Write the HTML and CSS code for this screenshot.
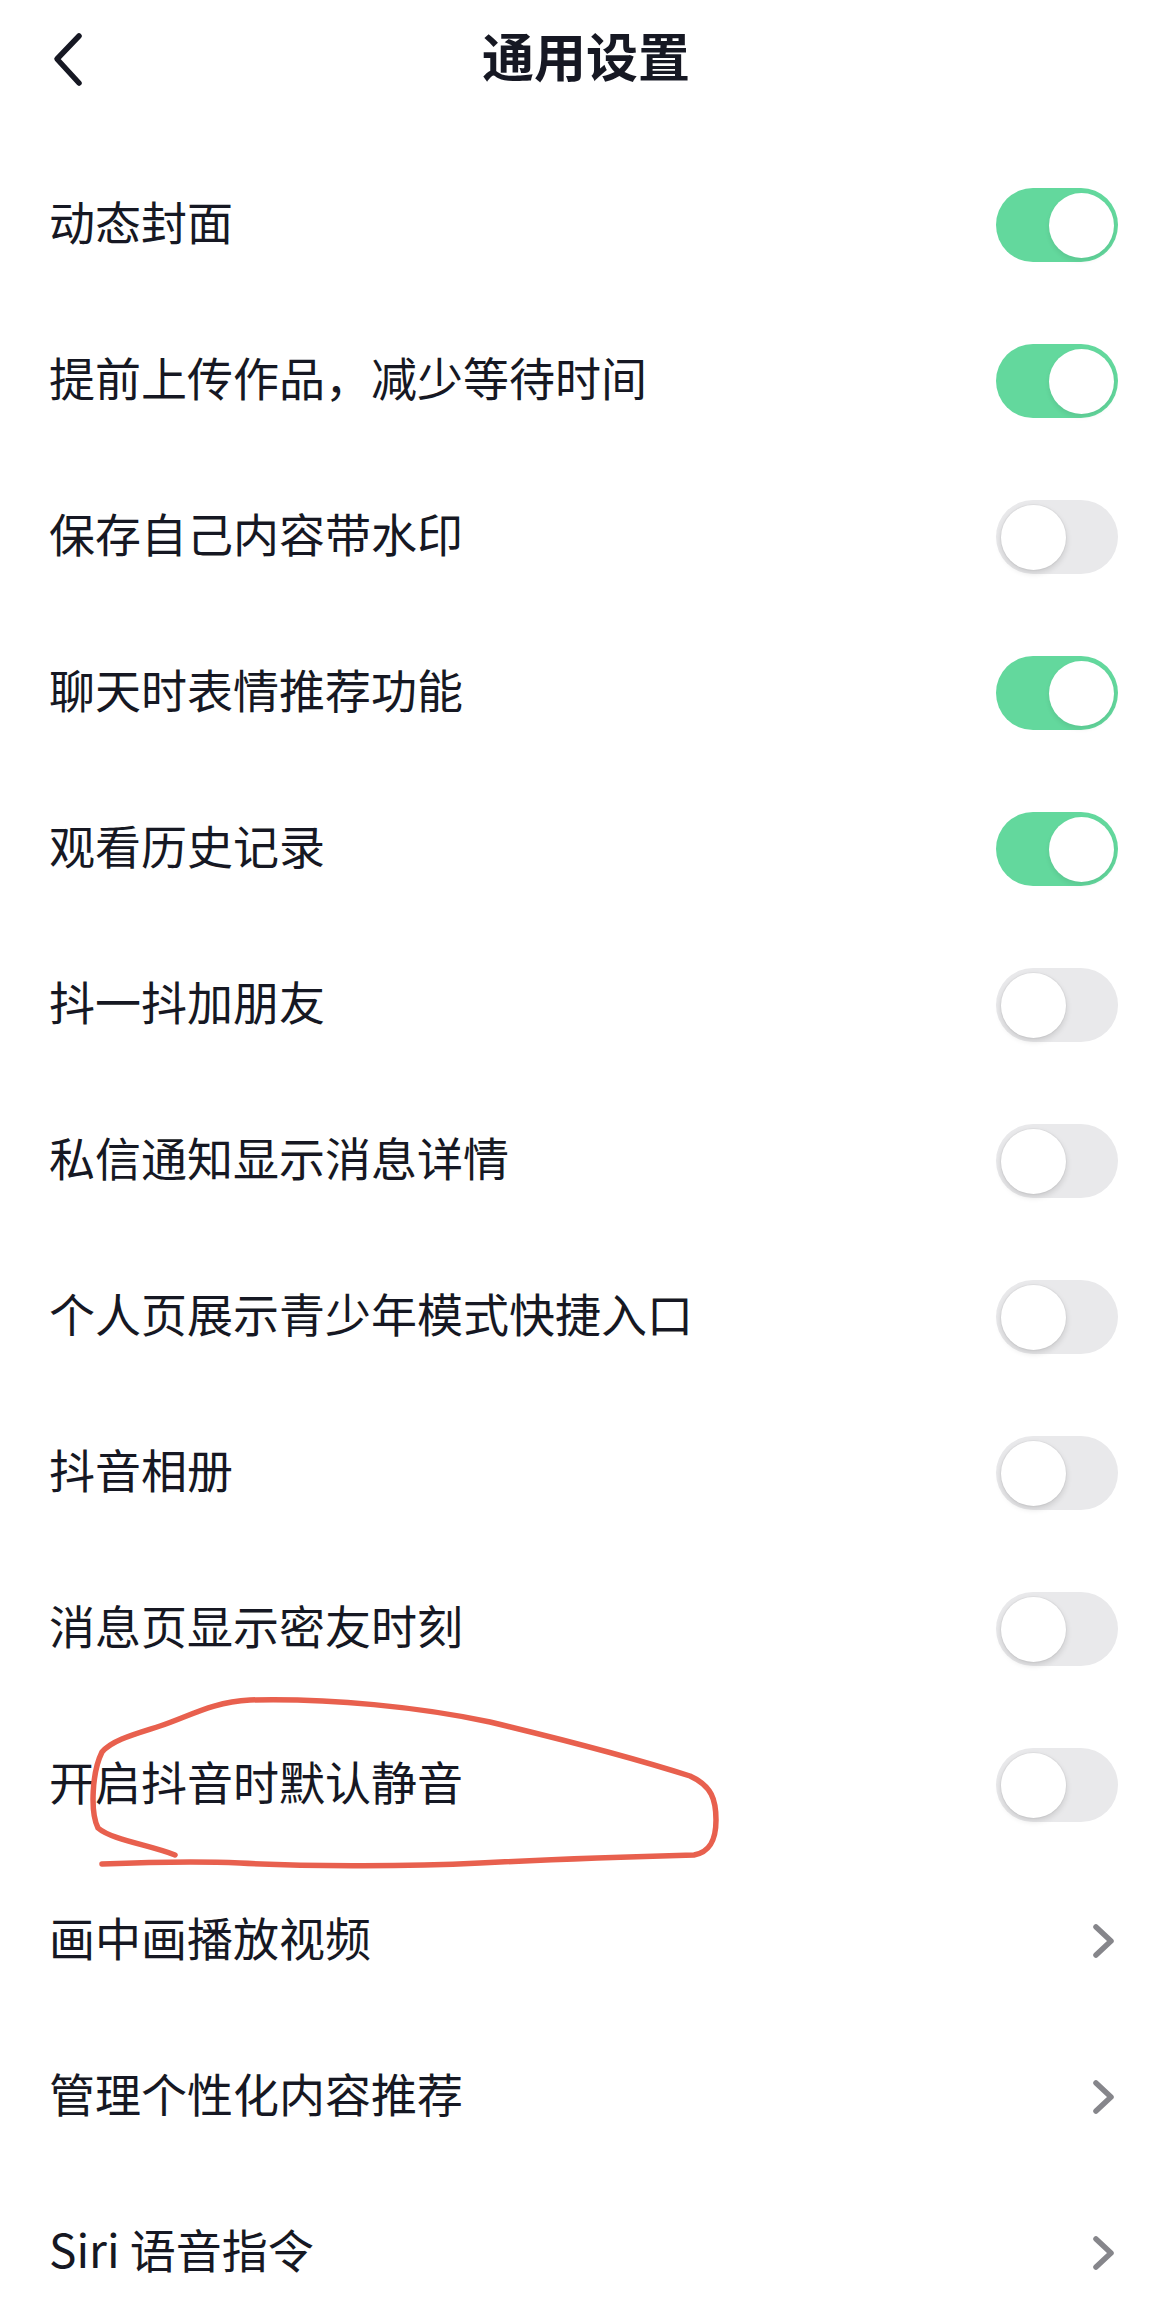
FILE: index.html
```html
<!DOCTYPE html>
<html>
<head>
    <meta charset="utf-8">
    <title>通用设置</title>
    <link rel="stylesheet" href="styles.css">
</head>
<body>
    <div class="page">
        <div class="header">
            <a class="back" href="#">
                <svg width="40" height="64" viewBox="0 0 40 64">
                    <path d="M26 10 L4 33 L26 57" fill="none" stroke="#161823" stroke-width="5.5" stroke-linecap="round" stroke-linejoin="round"/>
                </svg>
            </a>
            <h1>通用设置</h1>
            <span></span>
        </div>

        <div class="list">
            <div class="row"><span class="label">动态封面</span><span class="switch on"><span class="knob"></span></span></div>
            <div class="row"><span class="label">提前上传作品，减少等待时间</span><span class="switch on"><span class="knob"></span></span></div>
            <div class="row"><span class="label">保存自己内容带水印</span><span class="switch"><span class="knob"></span></span></div>
            <div class="row"><span class="label">聊天时表情推荐功能</span><span class="switch on"><span class="knob"></span></span></div>
            <div class="row"><span class="label">观看历史记录</span><span class="switch on"><span class="knob"></span></span></div>
            <div class="row"><span class="label">抖一抖加朋友</span><span class="switch"><span class="knob"></span></span></div>
            <div class="row"><span class="label">私信通知显示消息详情</span><span class="switch"><span class="knob"></span></span></div>
            <div class="row"><span class="label">个人页展示青少年模式快捷入口</span><span class="switch"><span class="knob"></span></span></div>
            <div class="row"><span class="label">抖音相册</span><span class="switch"><span class="knob"></span></span></div>
            <div class="row"><span class="label">消息页显示密友时刻</span><span class="switch"><span class="knob"></span></span></div>
            <div class="row"><span class="label">开启抖音时默认静音</span><span class="switch"><span class="knob"></span></span></div>
            <div class="row link"><span class="label">画中画播放视频</span>
                <svg class="chevron" width="24" height="36" viewBox="0 0 24 36"><path d="M4 4 L19 18 L4 32" fill="none" stroke="#86868b" stroke-width="5.5" stroke-linecap="round" stroke-linejoin="round"/></svg>
            </div>
            <div class="row link"><span class="label">管理个性化内容推荐</span>
                <svg class="chevron" width="24" height="36" viewBox="0 0 24 36"><path d="M4 4 L19 18 L4 32" fill="none" stroke="#86868b" stroke-width="5.5" stroke-linecap="round" stroke-linejoin="round"/></svg>
            </div>
            <div class="row link"><span class="label">Siri 语音指令</span>
                <svg class="chevron" width="24" height="36" viewBox="0 0 24 36"><path d="M4 4 L19 18 L4 32" fill="none" stroke="#86868b" stroke-width="5.5" stroke-linecap="round" stroke-linejoin="round"/></svg>
            </div>
        </div>

        <!-- hand-drawn red mark around the mute row -->
        <svg class="scribble" width="740" height="190" viewBox="0 1690 740 190">
            <path d="M175 1855 C150 1845, 112 1840, 98 1828 C90 1812, 92 1772, 102 1752 C112 1740, 135 1734, 160 1726 C190 1716, 212 1702, 250 1700 C330 1698, 420 1707, 490 1722 C565 1740, 640 1760, 690 1776 C712 1786, 716 1800, 716 1820 C716 1840, 710 1852, 694 1855 C620 1857, 540 1860, 480 1863 C400 1867, 300 1866, 240 1863 C200 1861, 150 1862, 102 1864" fill="none" stroke="#e8604e" stroke-width="5.5" stroke-linecap="round" stroke-linejoin="round"/>
        </svg>
    </div>
</body>
</html>
```

FILE: styles.css
```css
/* Settings page */

body {
    margin: 0;
    padding: 0;
    background-color: #fff;
    font-family: "Noto Sans CJK SC", sans-serif;
    color: #161823;
}

.page {
    position: relative;
    width: 1170px;
}

.header {
    display: grid;
    grid-template-columns: 1fr auto 1fr;
    align-items: center;
    height: 115px;
}

.back {
    display: flex;
    align-items: center;
    padding-left: 53px;
}

h1 {
    margin: 0;
    font-size: 52px;
    font-weight: 700;
    line-height: 1;
    padding: 0 0 6px 2px;
}

.list {
    padding-top: 32px;
}

.row {
    display: flex;
    align-items: center;
    justify-content: space-between;
    height: 156px;
    padding: 0 52px 0 49px;
}

.label {
    font-size: 46px;
    line-height: 1;
    padding-bottom: 10px;
}

.switch {
    display: flex;
    align-items: center;
    box-sizing: border-box;
    width: 122px;
    height: 74px;
    padding: 4.5px;
    border-radius: 37px;
    background-color: #e9e9eb;
}

.switch.on {
    justify-content: flex-end;
    background-color: #63d89d;
}

.knob {
    width: 65px;
    height: 65px;
    border-radius: 50%;
    background-color: #fff;
    box-shadow: 0 3px 6px rgba(0, 0, 0, 0.14), 0 0 0 1px rgba(0, 0, 0, 0.03);
}

.switch.on .knob {
    box-shadow: 0 3px 5px rgba(0, 0, 0, 0.08);
}

.chevron {
    margin-right: 2px;
}

.scribble {
    position: absolute;
    left: 0;
    top: 1690px;
}
```
